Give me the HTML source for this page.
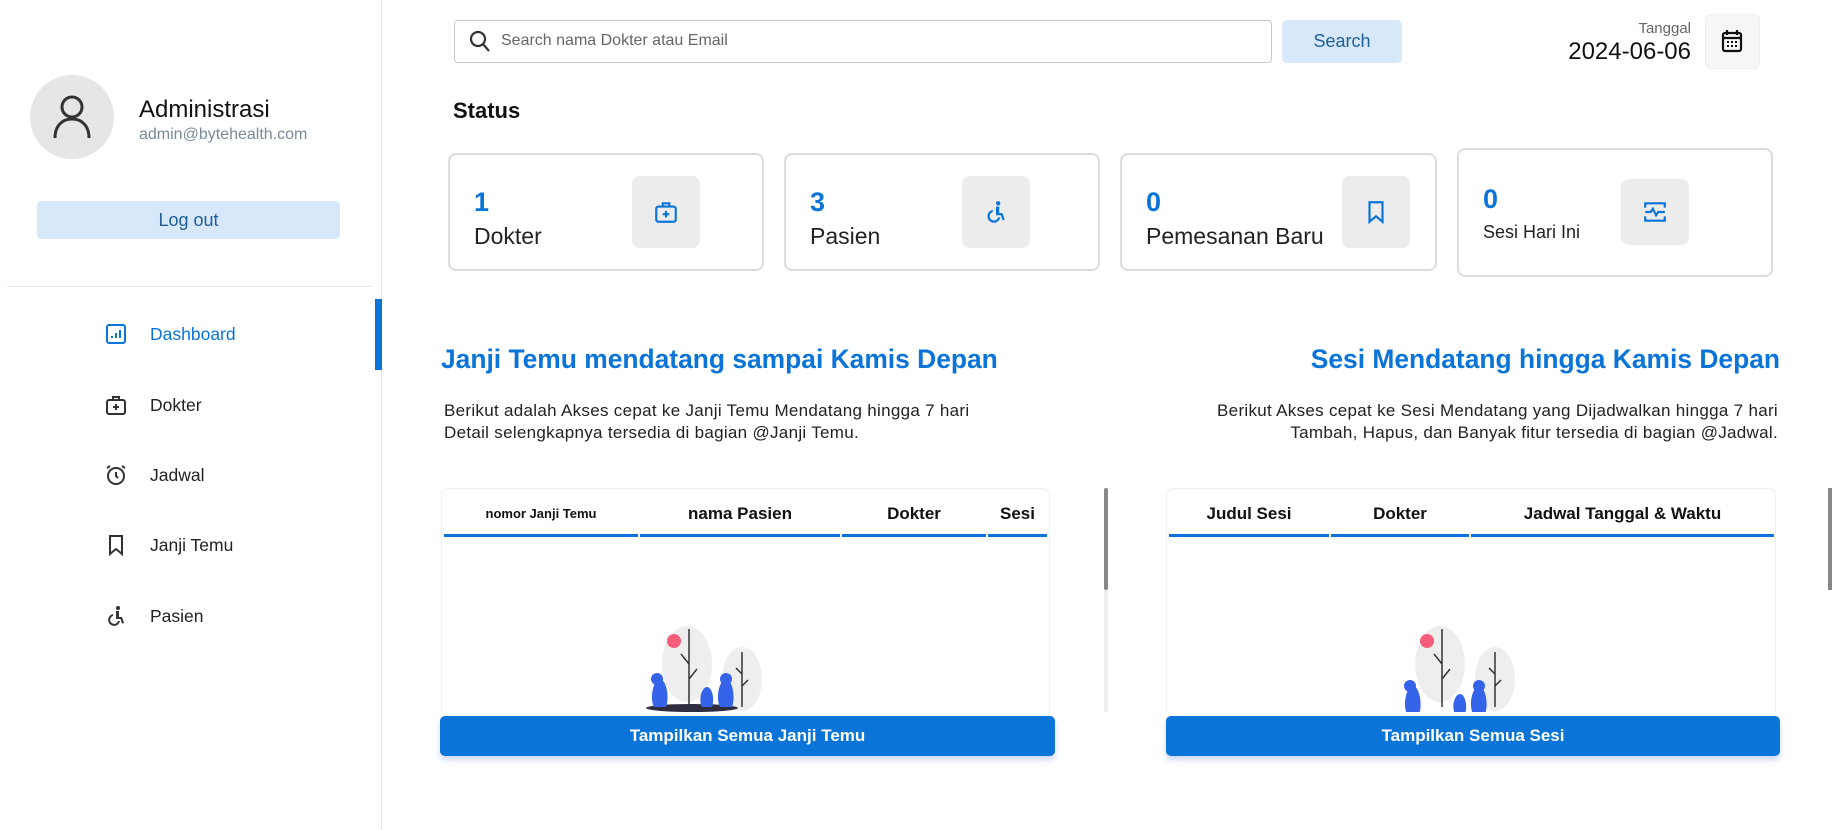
<!DOCTYPE html>
<html><head><meta charset="utf-8"><style>
*{box-sizing:border-box;margin:0;padding:0}
body{width:1832px;height:830px;overflow:hidden;background:#fff;font-family:"Liberation Sans",sans-serif;position:relative;color:#111}
.a{position:absolute}
.side{left:0;top:0;width:382px;height:830px;border-right:1px solid #e6e6e6}
.nav{position:absolute;left:104px;font-size:17.5px;color:#222;display:flex;align-items:center}
.nav svg{width:24px;height:24px;margin-right:22px}
.card{position:absolute;border:2px solid #ddd;border-radius:8px;background:#fff}
.card .n{position:absolute;left:24px;font-size:27px;color:#0a74d8;font-weight:bold}
.card .l{position:absolute;left:24px;font-size:23px;color:#222}
.ib{position:absolute;width:68px;height:72px;background:#ececec;border-radius:8px;display:flex;align-items:center;justify-content:center}
.ib svg{width:26px;height:26px}
h2{position:absolute;font-size:26.4px;color:#0a74d8;font-weight:bold;top:344px}
.desc{position:absolute;font-size:17px;letter-spacing:.3px;color:#222;line-height:22px;top:400px}
.tbl{position:absolute;top:488px;height:224px;border:1px solid #eee;border-bottom:none;border-radius:8px 8px 0 0;background:#fff;overflow:hidden}
.th{position:absolute;top:10px;height:38px;border-bottom:3px solid #0a74d8;text-align:center;font-size:17px;font-weight:bold;line-height:30px;color:#111}
.btn{position:absolute;top:716px;height:40px;background:#0a74d8;border-radius:5px;color:#fff;font-size:17px;font-weight:bold;text-align:center;line-height:40px;box-shadow:0 4px 6px rgba(60,100,230,.25)}
</style></head><body>
<div class="a side"></div>
<div class="a" style="left:30px;top:75px;width:84px;height:84px;border-radius:50%;background:#e6e6e6"></div>
<svg class="a" style="left:50px;top:94px" width="44" height="46" viewBox="0 0 44 46" fill="none" stroke="#333" stroke-width="3"><circle cx="22" cy="13" r="10"/><path d="M5 44c0-12 7-19 17-19s17 7 17 19"/></svg>
<div class="a" style="left:139px;top:96px;font-size:24px;color:#111">Administrasi</div>
<div class="a" style="left:139px;top:126px;font-size:16px;color:#7a8a99">admin@bytehealth.com</div>
<div class="a" style="left:37px;top:201px;width:303px;height:38px;background:#d6e8f9;border-radius:5px;text-align:center;line-height:38px;font-size:18px;color:#1f5f99">Log out</div>
<div class="a" style="left:7px;top:286px;width:364px;height:1px;background:#e6e6e6"></div>
<div class="a" style="left:375px;top:299px;width:7px;height:71px;background:#0a74d8"></div>
<div class="nav" style="top:322px;color:#0a74d8"><svg viewBox="0 0 24 24" fill="none" stroke="#0a74d8" stroke-width="2"><rect x="3" y="3" width="18" height="18" rx="2"/><path d="M8 16v-2M12 16v-5M16 16v-8"/></svg>Dashboard</div>
<div class="nav" style="top:393px"><svg viewBox="0 0 24 24" fill="none" stroke="#333" stroke-width="2"><rect x="3" y="7" width="18" height="14" rx="2"/><path d="M9 7V4h6v3M12 11v6M9 14h6"/></svg>Dokter</div>
<div class="nav" style="top:463px"><svg viewBox="0 0 24 24" fill="none" stroke="#333" stroke-width="2"><circle cx="12" cy="13" r="8"/><path d="M12 9v4l2 2M3 5l3-2M21 5l-3-2"/></svg>Jadwal</div>
<div class="nav" style="top:533px"><svg viewBox="0 0 24 24" fill="none" stroke="#333" stroke-width="2"><path d="M6 3h12v18l-6-5-6 5z"/></svg>Janji Temu</div>
<div class="nav" style="top:604px"><svg viewBox="0 0 24 24" fill="#333"><circle cx="14" cy="4" r="2"/><path d="M12 7h3v6h3l2 6-2 .6-1.5-4.6H12zM9 10v2a4 4 0 1 0 5 5h2a6 6 0 1 1-7-7z"/></svg>Pasien</div>

<div class="a" style="left:454px;top:20px;width:818px;height:43px;border:1px solid #c8c8c8;border-radius:4px"></div>
<svg class="a" style="left:469px;top:30px" width="22" height="24" viewBox="0 0 22 24" fill="none" stroke="#333" stroke-width="2.2"><circle cx="9" cy="9" r="7"/><path d="M14 14l6 7"/></svg>
<div class="a" style="left:501px;top:32px;font-size:16px;color:#666">Search nama Dokter atau Email</div>
<div class="a" style="left:1282px;top:20px;width:120px;height:43px;background:#d6e8f9;border-radius:5px;text-align:center;line-height:43px;font-size:18px;color:#1f5f99">Search</div>
<div class="a" style="right:141px;top:20px;font-size:15px;color:#666">Tanggal</div>
<div class="a" style="right:141px;top:38px;font-size:24px;color:#111">2024-06-06</div>
<div class="a" style="left:1705px;top:14px;width:55px;height:55px;background:#f6f6f6;border:1px solid #eee;border-radius:6px"></div>
<svg class="a" style="left:1721px;top:29px" width="22" height="24" viewBox="0 0 22 24" fill="none" stroke="#111" stroke-width="2.2"><rect x="2" y="4" width="18" height="18" rx="2"/><path d="M2 9h18M6 1v5M16 1v5"/><path d="M6 13h2M10 13h2M14 13h2M6 17h2M10 17h2M14 17h2" stroke-width="2"/></svg>
<div class="a" style="left:453px;top:98px;font-size:22px;font-weight:bold">Status</div>

<div class="card" style="left:448px;top:153px;width:316px;height:118px"><div class="n" style="top:32px">1</div><div class="l" style="top:68px">Dokter</div><div class="ib" style="left:182px;top:21px"><svg viewBox="0 0 24 24" fill="none" stroke="#0a74d8" stroke-width="2"><rect x="3" y="7" width="18" height="14" rx="2"/><path d="M9 7V4h6v3M12 11v6M9 14h6"/></svg></div></div>
<div class="card" style="left:784px;top:153px;width:316px;height:118px"><div class="n" style="top:32px">3</div><div class="l" style="top:68px">Pasien</div><div class="ib" style="left:176px;top:21px"><svg viewBox="0 0 24 24" fill="#0a74d8"><circle cx="14" cy="4" r="2"/><path d="M12 7h3v6h3l2 6-2 .6-1.5-4.6H12zM9 10v2a4 4 0 1 0 5 5h2a6 6 0 1 1-7-7z"/></svg></div></div>
<div class="card" style="left:1120px;top:153px;width:317px;height:118px"><div class="n" style="top:32px">0</div><div class="l" style="top:68px">Pemesanan Baru</div><div class="ib" style="left:220px;top:21px"><svg viewBox="0 0 24 24" fill="none" stroke="#0a74d8" stroke-width="2"><path d="M6 3h12v18l-6-5-6 5z"/></svg></div></div>
<div class="card" style="left:1457px;top:148px;width:316px;height:129px"><div class="n" style="top:34px">0</div><div class="l" style="top:72px;font-size:18px">Sesi Hari Ini</div><div class="ib" style="left:162px;top:29px;height:66px"><svg viewBox="0 0 24 24" fill="none" stroke="#0a74d8" stroke-width="2"><path d="M3 8V4h18v4M3 16v4h18v-4M3 12h5l2-3 3 6 2-3h6"/></svg></div></div>

<h2 style="left:441px">Janji Temu mendatang sampai Kamis Depan</h2>
<h2 style="right:52px">Sesi Mendatang hingga Kamis Depan</h2>
<div class="desc" style="left:444px">Berikut adalah Akses cepat ke Janji Temu Mendatang hingga 7 hari<br>Detail selengkapnya tersedia di bagian @Janji Temu.</div>
<div class="desc" style="right:54px;text-align:right">Berikut Akses cepat ke Sesi Mendatang yang Dijadwalkan hingga 7 hari<br>Tambah, Hapus, dan Banyak fitur tersedia di bagian @Jadwal.</div>

<div class="tbl" style="left:441px;width:609px">
<div class="th" style="left:2px;width:194px;font-size:13px">nomor Janji Temu</div>
<div class="th" style="left:198px;width:200px">nama Pasien</div>
<div class="th" style="left:400px;width:144px">Dokter</div>
<div class="th" style="left:546px;width:59px">Sesi</div>
<svg class="a" style="left:200px;top:135px" width="140" height="90" viewBox="0 0 140 90"><ellipse cx="45" cy="40" rx="25" ry="38" fill="#eee"/><ellipse cx="100" cy="55" rx="20" ry="32" fill="#eee"/><circle cx="32" cy="17" r="7" fill="#f55d7a"/><path d="M47 5v78M100 28v55M47 40l-8-10M47 55l8-10M100 50l-6-6M100 62l6-6" stroke="#333" stroke-width="1.5" fill="none"/><ellipse cx="50" cy="84" rx="46" ry="4" fill="#2f2e41"/><path d="M12 83c-5-10 0-28 6-28s10 18 6 28z M60 83c-4-8 0-20 5-20s8 12 5 20z M78 83c-5-10 0-28 6-28s10 18 6 28z" fill="#3563e9"/><circle cx="15" cy="55" r="6" fill="#3563e9"/><circle cx="84" cy="55" r="6" fill="#3563e9"/></svg>
</div>
<div class="a" style="left:1104px;top:488px;width:4px;height:224px;background:#eee"></div>
<div class="a" style="left:1104px;top:488px;width:4px;height:102px;background:#888;border-radius:2px"></div>
<div class="a" style="left:1828px;top:488px;width:4px;height:102px;background:#888"></div>
<div class="tbl" style="left:1166px;width:610px">
<div class="th" style="left:2px;width:160px">Judul Sesi</div>
<div class="th" style="left:164px;width:138px">Dokter</div>
<div class="th" style="left:304px;width:303px">Jadwal Tanggal &amp; Waktu</div>
<svg class="a" style="left:228px;top:135px" width="140" height="90" viewBox="0 0 140 90"><ellipse cx="45" cy="40" rx="25" ry="38" fill="#eee"/><ellipse cx="100" cy="55" rx="20" ry="32" fill="#eee"/><circle cx="32" cy="17" r="7" fill="#f55d7a"/><path d="M47 5v78M100 28v55M47 40l-8-10M47 55l8-10M100 50l-6-6M100 62l6-6" stroke="#333" stroke-width="1.5" fill="none"/><path d="M12 90c-5-10 0-28 6-28s10 18 6 28z M60 90c-4-8 0-20 5-20s8 12 5 20z M78 90c-5-10 0-28 6-28s10 18 6 28z" fill="#3563e9"/><circle cx="15" cy="62" r="6" fill="#3563e9"/><circle cx="84" cy="62" r="6" fill="#3563e9"/></svg>
</div>
<div class="btn" style="left:440px;width:615px">Tampilkan Semua Janji Temu</div>
<div class="btn" style="left:1166px;width:614px">Tampilkan Semua Sesi</div>
</body></html>
